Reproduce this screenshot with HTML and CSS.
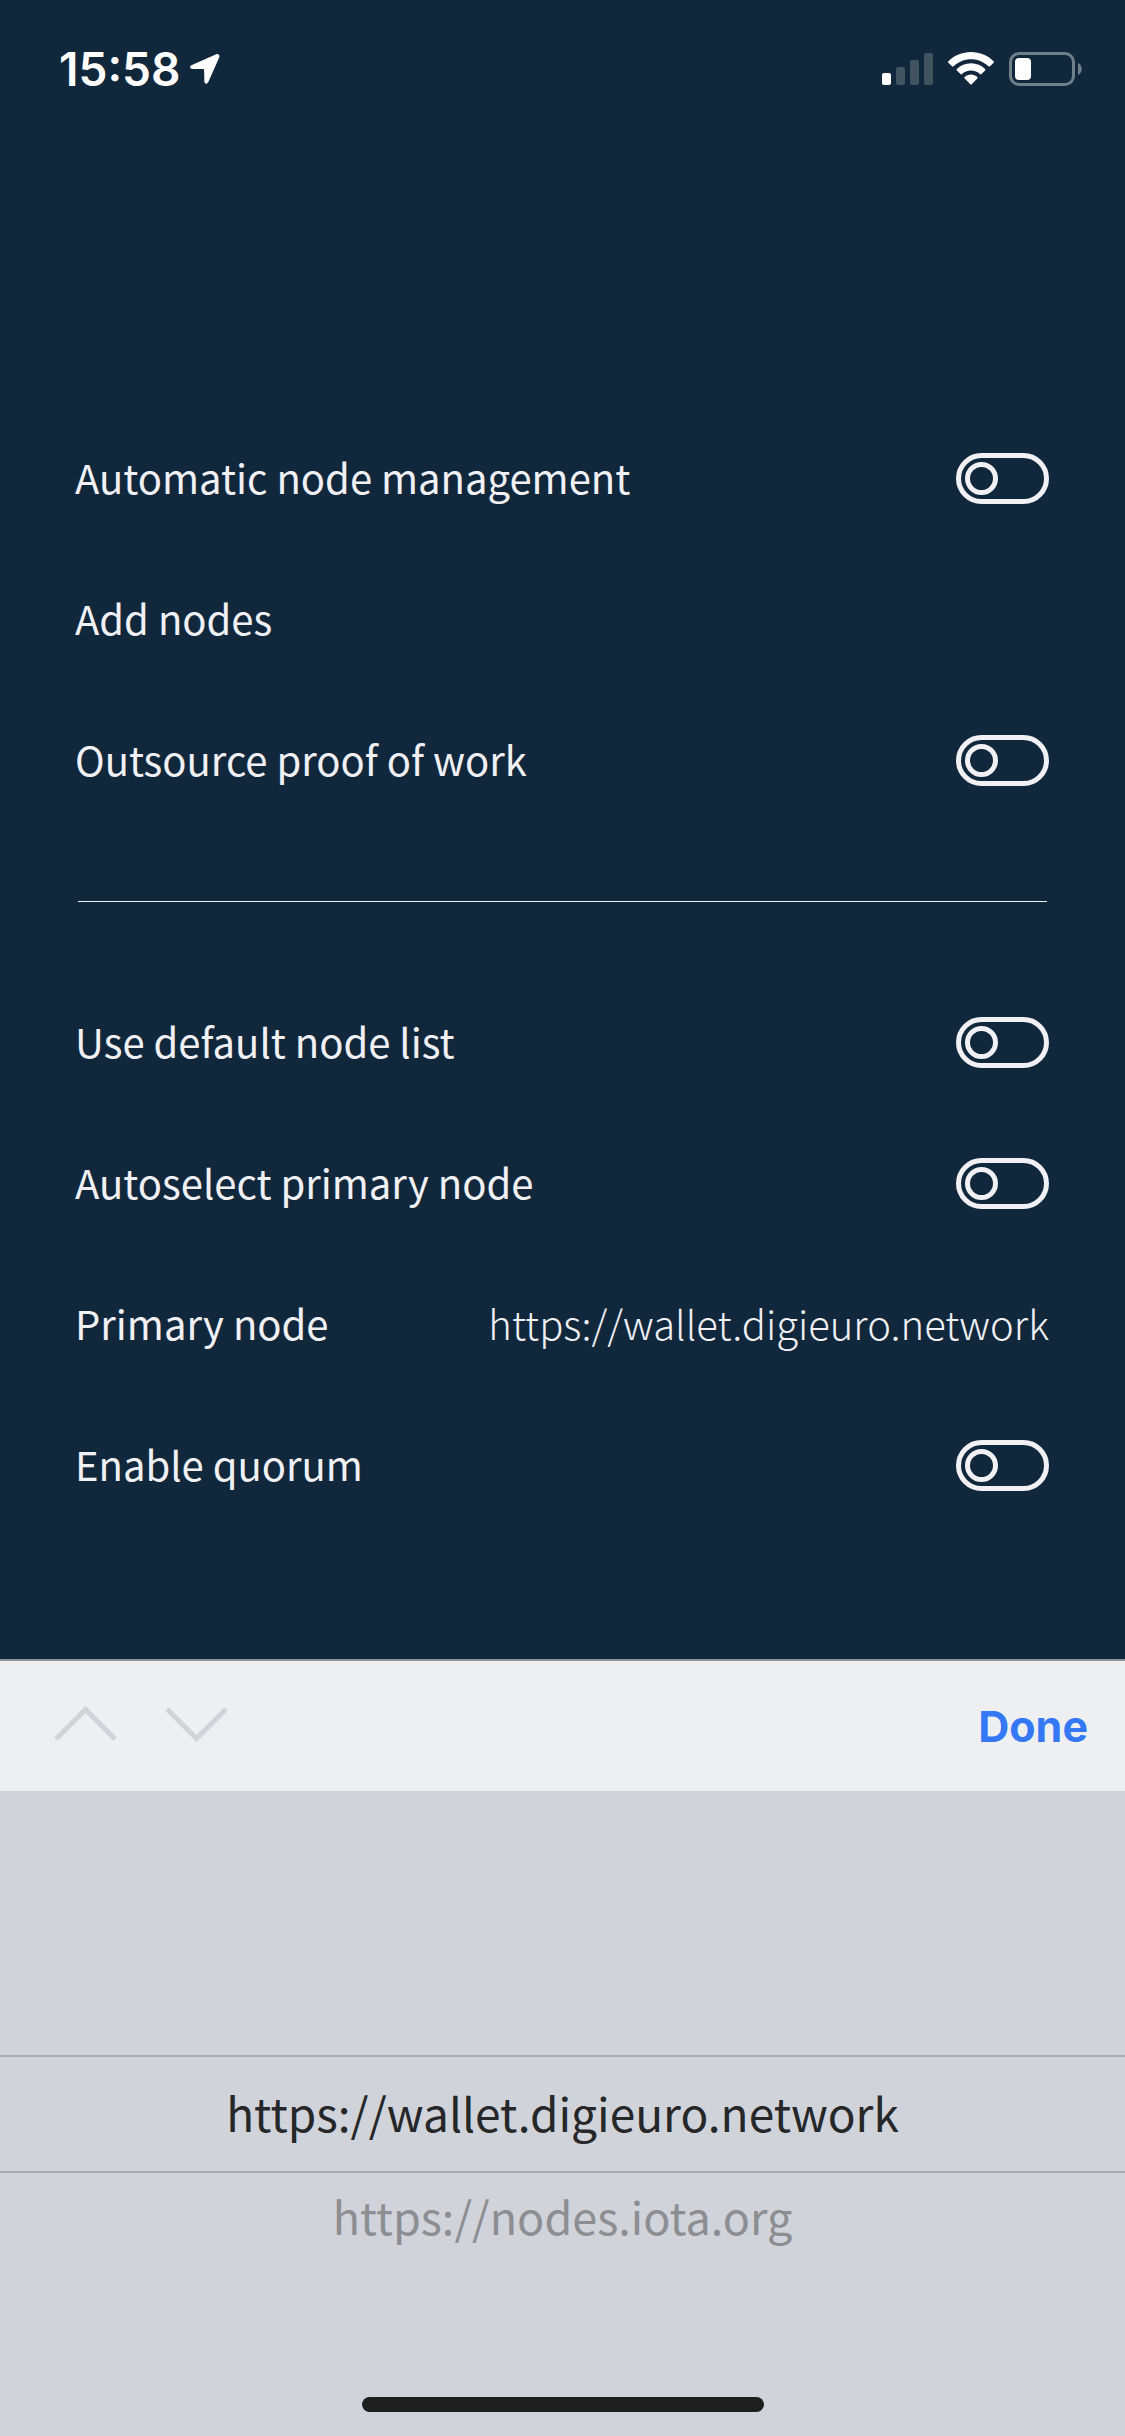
FILE: index.html
```html
<!DOCTYPE html>
<html lang="en">
<head>
<meta charset="utf-8">
<meta name="viewport" content="width=device-width, initial-scale=1">
<title>Node settings</title>
<link rel="stylesheet" href="styles.css">
</head>
<body>
<div class="screen">
  <header class="status-bar">
    <div class="status-group status-left">
      <time class="clock">15:58</time>
      <svg class="location" width="30" height="30" viewBox="0 0 30 30" aria-hidden="true">
        <path d="M26.2.3 1.4 11.2C-.6 12.2-.2 14.8 2 14.9l11 .2c.8 0 1.1.3 1.1 1.1l.3 11.6c.1 2.3 2.9 2.5 3.8.5L29.2 3.4C30.1 1.3 28.300-.6 26.200.3z" fill="#fff"/>
      </svg>
    </div>
    <div class="status-group status-right">
      <svg width="51" height="34" viewBox="0 0 51 34" aria-hidden="true">
        <rect x="0" y="21" width="9" height="12" rx="2" fill="#fff"/>
        <g fill="#40535f">
          <rect x="14" y="15" width="9" height="18" rx="2"/>
          <rect x="28" y="8" width="9" height="25" rx="2"/>
          <rect x="42" y="1" width="9" height="32" rx="2"/>
        </g>
      </svg>
      <svg width="46" height="34" viewBox="0 0 46 34" aria-hidden="true">
        <g fill="#fff">
          <path d="M23 0C14.200 0 6.100 3.500.4 9.200c-.5.5-.5 1 0 1.500l3.600 3.600c.5.5 1 .5 1.500 0C10 9.900 16.200 7.200 23 7.200s13 2.700 17.500 7.100c.5.5 1 .5 1.500 0l3.600-3.600c.5-.5.5-1 0-1.500C39.900 3.500 31.800 0 23 0z"/>
          <path d="M23 11.200c-5.500 0-10.500 2.200-14.100 5.700-.5.5-.5 1 0 1.500l3.600 3.600c.5.5 1 .5 1.500 0 2.300-2.200 5.500-3.600 9-3.600s6.700 1.400 9 3.600c.5.5 1 .5 1.500 0l3.600-3.600c.5-.5.5-1 0-1.500-3.600-3.500-8.600-5.700-14.100-5.700z"/>
          <path d="M23 22.600c-2.500 0-4.700.9-6.300 2.400-.5.5-.5.900 0 1.400l5.600 5.900c.5.500.9.500 1.400 0l5.600-5.900c.5-.5.5-.9 0-1.400-1.600-1.500-3.800-2.400-6.300-2.400z"/>
        </g>
      </svg>
      <svg width="73" height="34" viewBox="0 0 73 34" aria-hidden="true">
        <rect x="1.500" y="1.500" width="63" height="31" rx="8.500" fill="none" stroke="#70808b" stroke-width="3"/>
        <rect x="6" y="6" width="16" height="22" rx="4" fill="#fff"/>
        <path d="M69 11c5 2 5 10 0 12z" fill="#70808b"/>
      </svg>
    </div>
  </header>

  <main class="settings">
    <div class="row">
      <label class="label" for="auto">Automatic node management</label>
      <input class="toggle" type="checkbox" id="auto">
    </div>
    <div class="row">
      <button class="label" type="button">Add nodes</button>
    </div>
    <div class="row">
      <label class="label" for="pow">Outsource proof of work</label>
      <input class="toggle" type="checkbox" id="pow">
    </div>
    <div class="row"><hr class="divider"></div>
    <div class="row">
      <label class="label" for="default-list">Use default node list</label>
      <input class="toggle" type="checkbox" id="default-list">
    </div>
    <div class="row">
      <label class="label" for="autoselect">Autoselect primary node</label>
      <input class="toggle" type="checkbox" id="autoselect">
    </div>
    <div class="row">
      <label class="label" for="primary">Primary node</label>
      <select class="label node-select" id="primary">
        <option selected>https://wallet.digieuro.network</option>
        <option>https://nodes.iota.org</option>
      </select>
    </div>
    <div class="row">
      <label class="label" for="quorum">Enable quorum</label>
      <input class="toggle" type="checkbox" id="quorum">
    </div>
  </main>

  <section class="sheet">
    <div class="toolbar">
      <button class="step" type="button" disabled aria-label="Previous">
        <svg width="63" height="36" viewBox="0 0 63 36"><path d="M2 33 31.500 3.500 61 33" fill="none" stroke="#d0d3da" stroke-width="5"/></svg>
      </button>
      <button class="step" type="button" disabled aria-label="Next">
        <svg width="63" height="36" viewBox="0 0 63 36"><path d="M2 3 31.500 32.500 61 3" fill="none" stroke="#d0d3da" stroke-width="5"/></svg>
      </button>
      <button class="done" type="button">Done</button>
    </div>
    <ul class="picker" role="listbox" aria-label="Primary node">
      <li class="option selected" role="option" aria-selected="true">https://wallet.digieuro.network</li>
      <li class="option" role="option" aria-selected="false">https://nodes.iota.org</li>
    </ul>
    <div class="home-indicator"></div>
  </section>
</div>
</body>
</html>
```

FILE: styles.css
```css
* {
  box-sizing: border-box;
}

body {
  margin: 0;
  background: #11283c;
  color: #f0f0f5;
  font-family: "Noto Sans CJK SC", "Noto Sans", sans-serif;
  font-size: 40px;
  line-height: 60px;
}

button,
select {
  margin: 0;
  padding: 0;
  border: 0;
  background: none;
  color: inherit;
  font: inherit;
}

svg {
  display: block;
}

.screen {
  display: flex;
  flex-direction: column;
  min-height: 100vh;
}

.status-bar {
  display: flex;
  justify-content: space-between;
  align-items: center;
  height: 138px;
  padding: 0 43px 0 59px;
}

.status-group {
  display: flex;
  align-items: center;
}

.status-left {
  gap: 10px;
}

.status-right {
  gap: 15px;
}

.clock {
  color: #fff;
  font: 600 46px/60px Inter, sans-serif;
}

.settings {
  flex: 1;
  padding: 270px 76px 0 75px;
}

.row {
  display: flex;
  justify-content: space-between;
  align-items: center;
  height: 141px;
}

.label {
  padding-bottom: 4px;
}

.toggle {
  appearance: none;
  width: 93px;
  height: 51px;
  margin: 0;
  padding: 4px;
  border: 5px solid #f0f0f5;
  border-radius: 26px;
}

.toggle::before {
  content: "";
  display: block;
  box-sizing: border-box;
  width: 33px;
  height: 33px;
  border: 5px solid #f0f0f5;
  border-radius: 50%;
}

.toggle:checked::before {
  margin-left: auto;
}

.divider {
  flex: 1;
  height: 1px;
  margin: 0 2px 0 3px;
  border: 0;
  background: #f0f0f5;
}

.node-select {
  appearance: none;
  font-weight: 200;
  text-align-last: right;
}

.sheet {
  display: flex;
  flex-direction: column;
  background: #d0d3da;
}

.toolbar {
  display: flex;
  align-items: center;
  gap: 48px;
  height: 132px;
  padding: 0 37px 0 54px;
  border-top: 2px solid #919599;
  background: #eeeff1;
}

.step {
  padding-bottom: 4px;
}

.done {
  margin-left: auto;
  color: #3478f6;
  font: 700 43px/60px Inter, sans-serif;
}

.picker {
  margin: 0;
  padding: 264px 0 0;
  list-style: none;
  text-align: center;
}

.option {
  height: 92px;
  color: #8c8e92;
  font-size: 45px;
  line-height: 86px;
}

.option.selected {
  height: 118px;
  border: solid #a6a9ad;
  border-width: 2px 0;
  color: #262729;
  font-size: 46px;
  line-height: 110px;
}

.home-indicator {
  align-self: center;
  width: 402px;
  height: 15px;
  margin: 132px 0 24px;
  border-radius: 8px;
  background: #1e1e1e;
}
```
